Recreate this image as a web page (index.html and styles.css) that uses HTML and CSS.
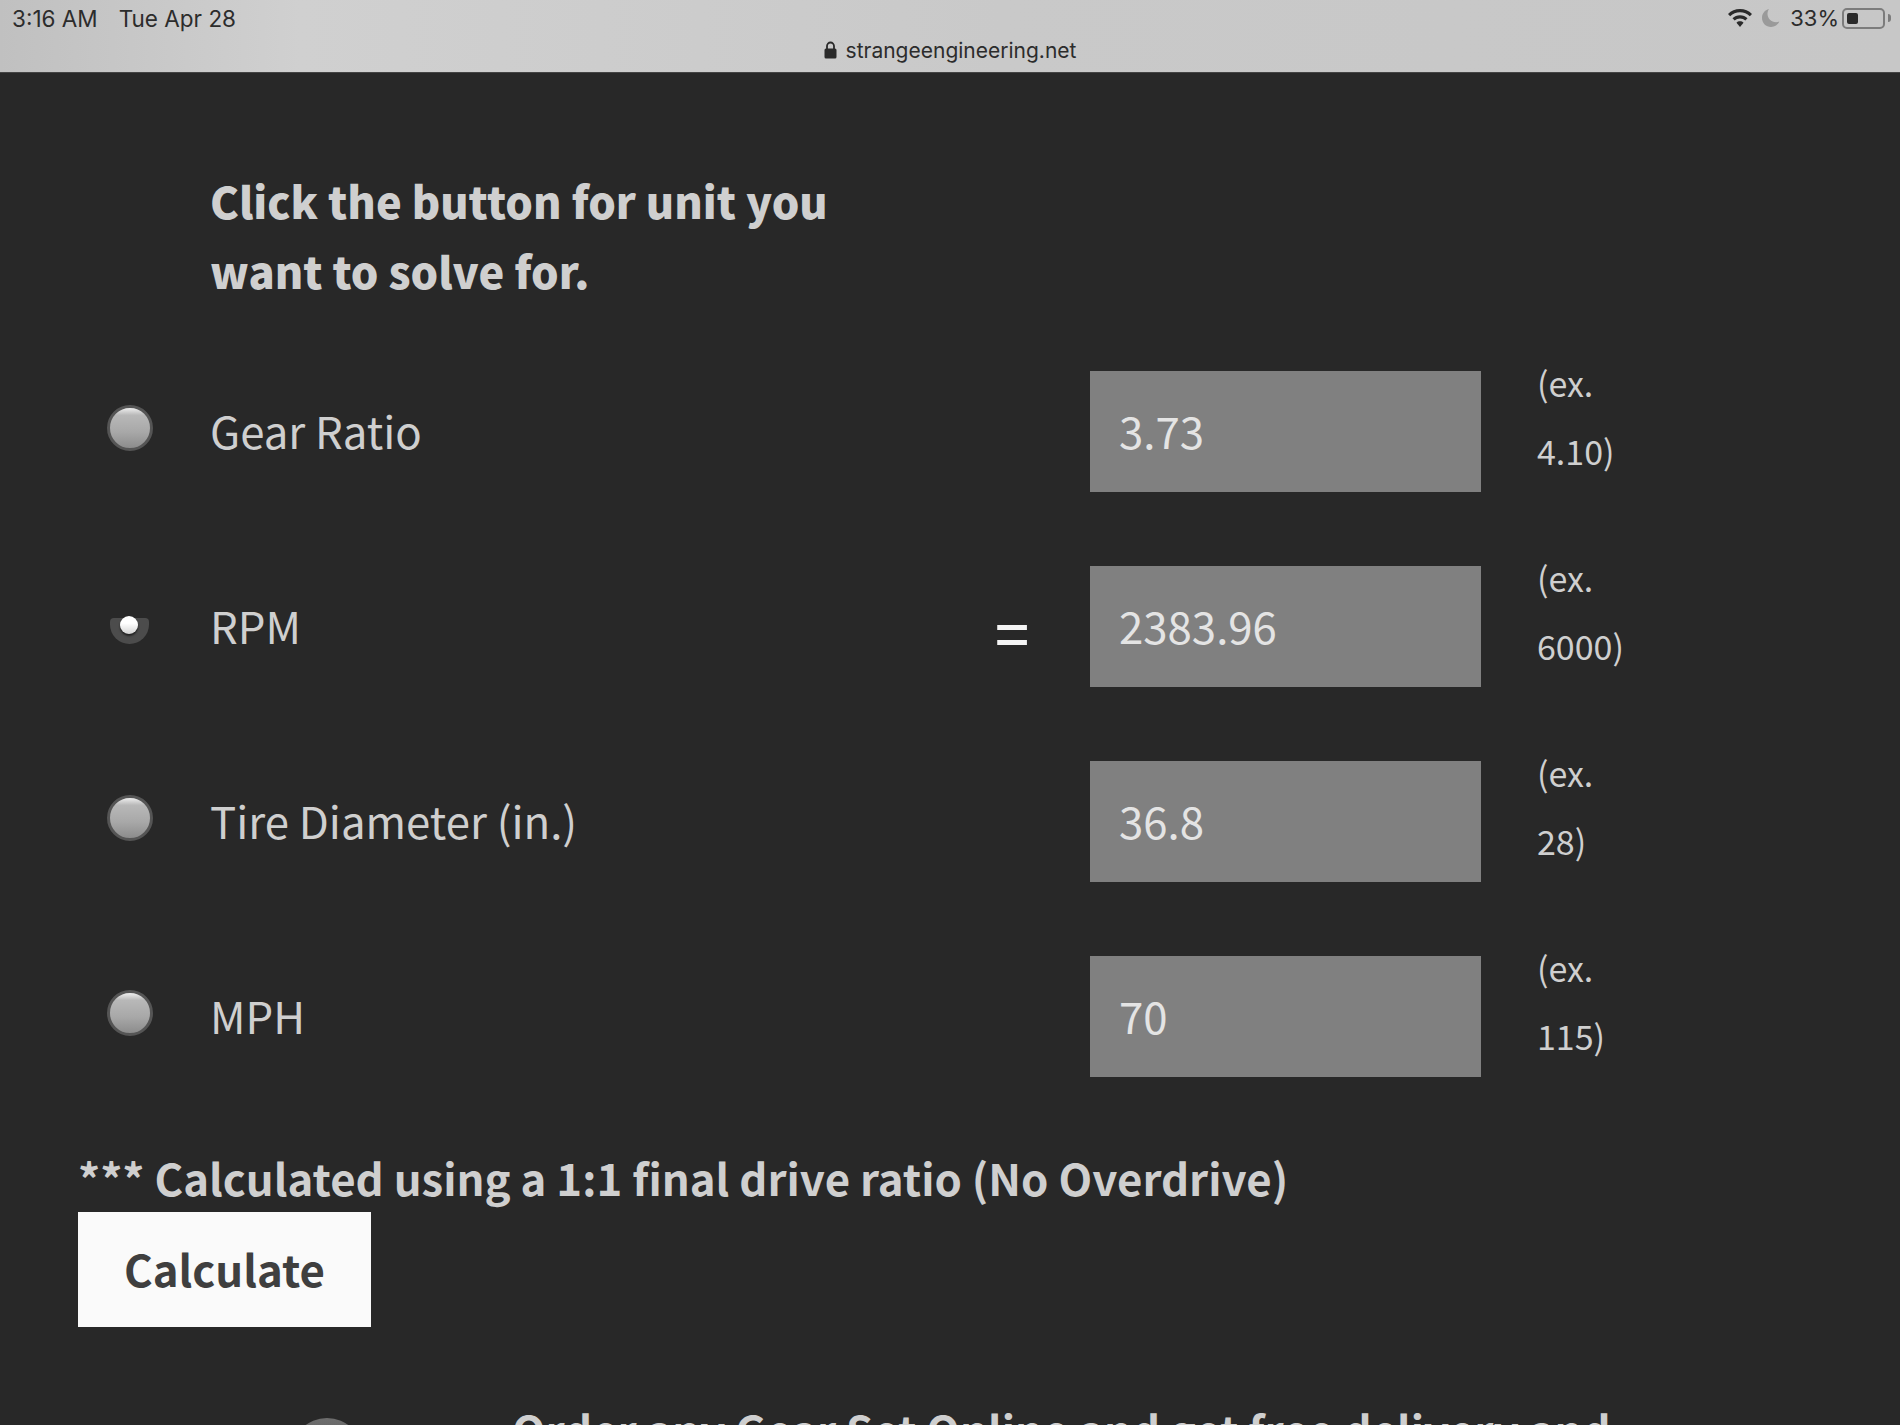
FILE: index.html
```html
<!DOCTYPE html>
<html lang="en">
<head>
    <meta charset="UTF-8">
    <title>Gear Ratio Calculator</title>
    <link rel="stylesheet" href="styles.css">
</head>
<body>
    <header class="status-bar">
        <div class="status-top">
            <div class="status-time">
                <span>3:16 AM</span>
                <span>Tue Apr 28</span>
            </div>
            <div class="status-icons">
                <svg class="icon-wifi" viewBox="0 0 26 20" width="26" height="20">
                    <path d="M13 1C8.300 1 4.200 2.900 1 5.900l2.200 2.400C5.900 5.800 9.200 4.300 13 4.300s7.100 1.500 9.800 4l2.200-2.400C21.800 2.900 17.700 1 13 1z" fill="#2a2a2a"/>
                    <path d="M13 7.200c-3 0-5.500 1.100-7.500 3l2.200 2.400c1.400-1.300 3.200-2.100 5.300-2.100s3.900.8 5.300 2.100l2.200-2.400c-2-1.900-4.500-3-7.500-3z" fill="#2a2a2a"/>
                    <path d="M13 13.300c-1.400 0-2.600.5-3.500 1.400l3.500 4.300 3.500-4.300c-.9-.9-2.100-1.400-3.500-1.400z" fill="#2a2a2a"/>
                </svg>
                <svg class="icon-moon" viewBox="0 0 20 20" width="20" height="20">
                    <path d="M8 1C3.800 2 1 5.500 1 10c0 5 4 9 9 9 3.800 0 6.900-2.200 8.300-5.400-1 .4-2 .6-3.100.6-5 0-8.700-3.900-8.700-8.500C6.500 3.900 7 2.300 8 1z" fill="#9a9a9a"/>
                </svg>
                <span class="status-pct">33%</span>
                <div class="battery"><div class="battery-level"></div></div>
                <div class="battery-nub"></div>
            </div>
        </div>
        <div class="status-url">
            <svg class="icon-lock" viewBox="0 0 13 18" width="13" height="18">
                <path d="M3 8V5a3.500 3.500 0 0 1 7 0v3" fill="none" stroke="#2a2a2a" stroke-width="1.800"/>
                <rect x="0.500" y="7.500" width="12" height="10" rx="1.500" fill="#2a2a2a"/>
            </svg>
            <span>strangeengineering.net</span>
        </div>
    </header>

    <main class="page">
        <h2 class="intro">Click the button for unit you<br>want to solve for.</h2>

        <div class="calc-grid">
            <span class="radio"></span>
            <span class="label">Gear Ratio</span>
            <span class="equals"></span>
            <input class="value" type="text" value="3.73">
            <span class="hint">(ex. 4.10)</span>

            <span class="radio-on"><span class="radio-dot"></span></span>
            <span class="label">RPM</span>
            <span class="equals">=</span>
            <input class="value" type="text" value="2383.96">
            <span class="hint">(ex. 6000)</span>

            <span class="radio"></span>
            <span class="label">Tire Diameter (in.)</span>
            <span class="equals"></span>
            <input class="value" type="text" value="36.8">
            <span class="hint">(ex. 28)</span>

            <span class="radio"></span>
            <span class="label">MPH</span>
            <span class="equals"></span>
            <input class="value" type="text" value="70">
            <span class="hint">(ex. 115)</span>
        </div>

        <p class="note">*** Calculated using a 1:1 final drive ratio (No Overdrive)</p>
        <button class="calc-btn">Calculate</button>

        <div class="promo">
            <div class="promo-img"></div>
            <p class="promo-text">Order any Gear Set Online and get free delivery and</p>
        </div>
    </main>
</body>
</html>
```

FILE: styles.css
```css
html, body {
    margin: 0;
    padding: 0;
    height: 1425px;
    overflow: hidden;
}
body {
    background-color: #282828;
    font-family: "Noto Sans CJK SC", "Noto Sans", sans-serif;
    color: #cfcfcf;
}

/* status bar */
.status-bar {
    height: 72px;
    background: linear-gradient(90deg, #c0c0c0 0, #d0d0d0 300px, #c9c9c9 1000px, #c7c7c7 100%);
    border-bottom: 1px solid #444;
    font-family: Inter, "Liberation Sans", sans-serif;
    color: #2c2c2c;
    font-size: 22px;
}
.status-top {
    display: flex;
    justify-content: space-between;
    align-items: center;
    height: 36px;
    padding: 0 9px 0 12px;
}
.status-time {
    display: flex;
    gap: 21px;
    font-size: 22.5px;
}
.status-icons {
    display: flex;
    align-items: center;
}
.icon-moon {
    margin-left: 8px;
}
.status-pct {
    margin-left: 9px;
}
.battery {
    width: 43px;
    height: 21px;
    margin-left: 3px;
    padding: 3px;
    box-sizing: border-box;
    border: 2px solid #7c7c7c;
    border-radius: 5px;
}
.battery-level {
    width: 11px;
    height: 100%;
    background: #2a2a2a;
    border-radius: 2px;
}
.battery-nub {
    width: 3px;
    height: 8px;
    margin-left: 3px;
    background: #7c7c7c;
    border-radius: 0 3px 3px 0;
}
.status-url {
    display: flex;
    justify-content: center;
    align-items: center;
    gap: 9px;
    height: 28px;
    font-size: 21px;
}

/* calculator */
.page {
    padding: 0 0 0 78px;
}
.intro {
    margin: 92px 0 0 132px;
    font-size: 43.4px;
    line-height: 70px;
    font-weight: 900;
}
.calc-grid {
    display: grid;
    grid-template-columns: 132px 747px 133px 391px 120px;
    grid-auto-rows: 121px;
    row-gap: 74px;
    margin-top: 66px;
    align-items: center;
}
.radio {
    width: 46px;
    height: 46px;
    margin: -7px 0 0 29px;
    box-sizing: border-box;
    border: 3px solid #555;
    border-radius: 50%;
    background: linear-gradient(180deg, #efefef 0, #b8b8b8 18%, #a8a8a8 60%, #8c8c8c 100%);
}
.radio-on {
    position: relative;
    width: 39px;
    height: 26px;
    margin: 9px 0 0 32px;
    background: #4c4c4c;
    border-radius: 4px 4px 20px 20px;
}
.radio-dot {
    position: absolute;
    left: 10px;
    top: -2px;
    width: 18px;
    height: 18px;
    border-radius: 50%;
    background: linear-gradient(180deg, #fff 40%, #d4d4d4 100%);
    box-shadow: 0 2px 2px #222;
}
.label {
    margin-top: -2px;
    font-size: 43.75px;
    font-weight: 400;
    line-height: 1;
}
.equals {
    margin-top: 8px;
    padding-left: 38px;
    font-size: 60px;
    font-weight: 500;
    line-height: 1;
    color: #f4f4f4;
}
.value {
    width: 391px;
    height: 121px;
    box-sizing: border-box;
    padding: 0 0 4px 29px;
    border: none;
    border-radius: 0;
    background: #808080;
    color: #e4e4e4;
    font-family: inherit;
    font-size: 43.75px;
}
.hint {
    align-self: start;
    margin: -22px 0 0 56px;
    font-size: 34px;
    line-height: 68px;
    width: 100px;
}
.note {
    margin: 70px 0 0;
    font-size: 43.75px;
    font-weight: 700;
    line-height: 60px;
}
.calc-btn {
    display: block;
    width: 293px;
    height: 115px;
    margin: 5px 0 0;
    padding: 0 0 3px;
    border: none;
    background: #fafafa;
    color: #3f3f3f;
    font-family: inherit;
    font-size: 43.75px;
    font-weight: 700;
}
.promo {
    display: flex;
    margin-top: 67px;
}
.promo-img {
    width: 72px;
    height: 72px;
    margin: 24px 0 0 213px;
    border-radius: 50%;
    background: linear-gradient(180deg, #6e6e6e, #444);
}
.promo-text {
    margin: 0 0 0 149px;
    font-size: 43.65px;
    font-weight: 700;
    line-height: 70px;
    white-space: nowrap;
}
```
